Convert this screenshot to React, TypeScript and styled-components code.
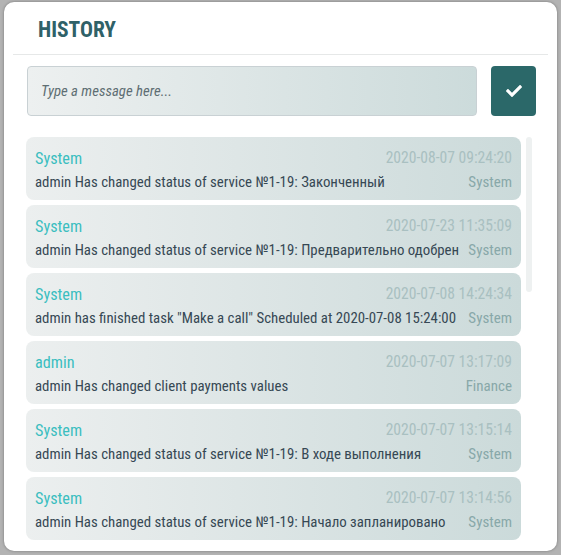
import React from "react";
import styled, { createGlobalStyle } from "styled-components";
import { FaCheck } from "react-icons/fa";

const GlobalStyle = createGlobalStyle`
  html, body { margin: 0; padding: 0; }
  body {
    background: #b3b3b3;
    font-family: Roboto, "Noto Sans", sans-serif;
    font-stretch: condensed;
    padding: 2px 4px 4px 4px;
  }
`;

const Card = styled.div`
  width: 553px;
  height: 549px;
  background: #fff;
  border-radius: 10px;
  box-shadow: 0 0 3px rgba(0, 0, 0, 0.35);
  display: flex;
  flex-direction: column;
  box-sizing: border-box;
  overflow: hidden;
`;

const Header = styled.div`
  margin: 0 9px;
  height: 53px;
  border-bottom: 1px solid #e6e8e8;
  padding-left: 25px;
  display: flex;
  align-items: center;
  box-sizing: border-box;
`;

const Title = styled.h1`
  margin: 0;
  padding-top: 3px;
  font-size: 21.5px;
  font-weight: 700;
  color: #2f6168;
`;

const Composer = styled.div`
  display: flex;
  gap: 14px;
  margin: 11px 21px 0 23px;
  height: 50px;
`;

const Input = styled.input`
  flex: 1;
  height: 50px;
  box-sizing: border-box;
  border: 1px solid #c9d1d4;
  border-radius: 4px;
  background: linear-gradient(90deg, #edf0f0 0%, #ccdbdb 100%);
  padding: 0 13px;
  font-family: inherit;
  font-stretch: condensed;
  font-size: 14.8px;
  color: #3d4b55;
  outline: none;
  &::placeholder {
    font-style: italic;
    color: #5e6e73;
  }
`;

const SendButton = styled.button`
  width: 45px;
  height: 50px;
  border: none;
  border-radius: 4px;
  background: #2b6869;
  color: #fff;
  display: flex;
  align-items: center;
  justify-content: center;
  padding: 0;
  cursor: pointer;
`;

const Body = styled.div`
  display: flex;
  gap: 5px;
  margin: 21px 0 0 22px;
  flex: 1;
  min-height: 0;
`;

const List = styled.div`
  width: 495px;
  display: flex;
  flex-direction: column;
  gap: 5px;
`;

const ScrollThumb = styled.div`
  width: 6px;
  height: 155px;
  border-radius: 3px;
  background: #eef1f1;
`;

const Item = styled.div`
  border-radius: 8px;
  background: linear-gradient(90deg, #ecefef 0%, #cbdada 100%);
  padding: 9px 9px 6px 9px;
  display: grid;
  grid-template-columns: minmax(0, 1fr) auto;
  grid-auto-rows: 24px;
  align-items: center;
  column-gap: 8px;
`;

const Author = styled.div`
  font-size: 16.2px;
  color: #3bbec0;
  white-space: nowrap;
`;

const Time = styled.div`
  font-size: 15.6px;
  color: #a9c0c1;
  text-align: right;
  white-space: nowrap;
`;

const Message = styled.div`
  font-size: 14.85px;
  color: #364854;
  white-space: nowrap;
`;

const Category = styled.div`
  font-size: 15px;
  color: #88a8a9;
  text-align: right;
  white-space: nowrap;
`;

type Entry = { author: string; time: string; text: string; category: string };

const entries: Entry[] = [
  { author: "System", time: "2020-08-07 09:24:20", text: "admin Has changed status of service №1-19: Законченный", category: "System" },
  { author: "System", time: "2020-07-23 11:35:09", text: "admin Has changed status of service №1-19: Предварительно одобрен", category: "System" },
  { author: "System", time: "2020-07-08 14:24:34", text: 'admin has finished task "Make a call" Scheduled at 2020-07-08 15:24:00', category: "System" },
  { author: "admin", time: "2020-07-07 13:17:09", text: "admin Has changed client payments values", category: "Finance" },
  { author: "System", time: "2020-07-07 13:15:14", text: "admin Has changed status of service №1-19: В ходе выполнения", category: "System" },
  { author: "System", time: "2020-07-07 13:14:56", text: "admin Has changed status of service №1-19: Начало запланировано", category: "System" },
];

export default function App() {
  return (
    <>
      <GlobalStyle />
      <Card>
        <Header>
          <Title>HISTORY</Title>
        </Header>
        <Composer>
          <Input placeholder="Type a message here..." />
          <SendButton aria-label="Send">
            <FaCheck size={16} />
          </SendButton>
        </Composer>
        <Body>
          <List>
            {entries.map((e, i) => (
              <Item key={i}>
                <Author>{e.author}</Author>
                <Time>{e.time}</Time>
                <Message>{e.text}</Message>
                <Category>{e.category}</Category>
              </Item>
            ))}
          </List>
          <ScrollThumb />
        </Body>
      </Card>
    </>
  );
}
